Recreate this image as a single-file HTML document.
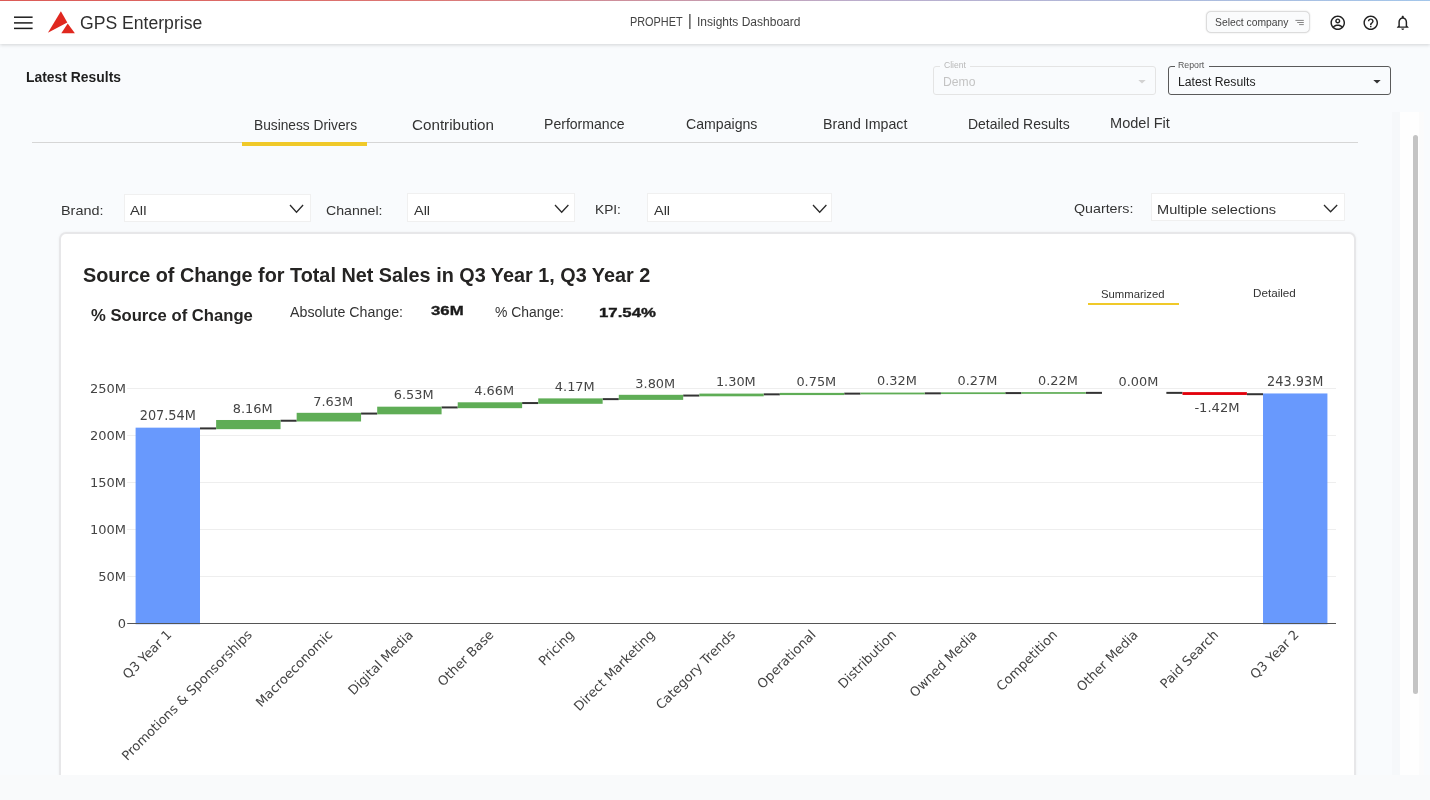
<!DOCTYPE html>
<html lang="en">
<head>
<meta charset="utf-8">
<title>GPS Enterprise - Insights Dashboard</title>
<style>
html,body{margin:0;padding:0}
body{width:1430px;height:800px;overflow:hidden;position:relative;will-change:transform;background:#f9fbfd;font-family:'Liberation Sans', Arial, sans-serif}
.abs{position:absolute}
.tx{position:absolute;white-space:nowrap;transform-origin:0 50%}
#topline{left:0;top:0;width:1430px;height:1px;background:linear-gradient(90deg,#dc5a56 0%,#dc7875 30%,#bbadcc 60%,#a3c6ea 100%)}
#header{left:0;top:0;width:1430px;height:43.6px;background:#fff;box-shadow:0 1px 3.5px rgba(0,0,0,.16)}
.dd{background:#fff;border:1px solid #f0f0f0;box-sizing:border-box}
#card{left:59.3px;top:231.7px;width:1296.8px;height:560px;background:#fff;border:2.3px solid #e7e7e9;border-radius:7px;box-sizing:border-box;box-shadow:0 0 3px rgba(0,0,0,.05)}
#bottom{left:0;top:775px;width:1430px;height:25px;background:#f9fafb}
</style>
</head>
<body>
<div id="header" class="abs"></div>
<div id="topline" class="abs"></div>
<!-- hamburger -->
<svg class="abs" style="left:12px;top:12px" width="24" height="24" viewBox="12 12 24 24"><g stroke="#1c1c1c" stroke-width="1.5"><line x1="14" x2="32.6" y1="17.2" y2="17.2"/><line x1="14" x2="32.6" y1="22.9" y2="22.9"/><line x1="14" x2="32.6" y1="28.4" y2="28.4"/></g></svg>
<!-- logo -->
<svg class="abs" style="left:46px;top:9px" width="32" height="28" viewBox="46 9 32 28"><polygon points="60.9,11.2 47.9,32.8 67.3,22.6" fill="#e0281f"/><polygon points="67.7,23.6 61.3,33.2 74.9,33.2" fill="#e0281f"/></svg>
<!-- separator bar between PROPHET and Insights -->
<span class="tx" id="t_bar" style="left:688.3px;top:11.6px;font-size:16px;line-height:18px;color:#333;transform:scaleX(.9)">|</span>
<!-- select company -->
<div class="abs" style="left:1206.3px;top:11.2px;width:103.8px;height:21.6px;border:1px solid #dcdcdc;border-radius:5px;box-sizing:border-box;background:#fafbfc;box-shadow:0 0 1.5px rgba(0,0,0,.18)"></div>
<svg class="abs" style="left:1294px;top:18px" width="12" height="9" viewBox="1294 18 12 9"><g stroke="#777" stroke-width="0.9"><line x1="1295.4" x2="1303.8" y1="20.4" y2="20.4"/><line x1="1297.2" x2="1303.8" y1="22.5" y2="22.5"/><line x1="1299.1" x2="1303.8" y1="24.6" y2="24.6"/></g></svg>
<svg class="abs" style="left:1328.95px;top:14.1px" width="17.5" height="17.5" viewBox="0 0 24 24"><path d="M12 2C6.48 2 2 6.48 2 12s4.48 10 10 10 10-4.48 10-10S17.52 2 12 2zM7.07 18.28c.43-.9 3.05-1.78 4.93-1.78s4.51.88 4.93 1.78C15.57 19.36 13.86 20 12 20s-3.57-.64-4.93-1.72zm11.29-1.45c-1.43-1.74-4.9-2.33-6.36-2.33s-4.93.59-6.36 2.33C4.62 15.49 4 13.82 4 12c0-4.41 3.59-8 8-8s8 3.59 8 8c0 1.82-.62 3.49-1.64 4.83zM12 6c-1.94 0-3.5 1.56-3.5 3.5S10.06 13 12 13s3.5-1.56 3.5-3.5S13.94 6 12 6zm0 5c-.83 0-1.5-.67-1.5-1.5S11.17 8 12 8s1.5.67 1.5 1.5S12.83 11 12 11z" fill="#222"/></svg>
<svg class="abs" style="left:1361.65px;top:14.1px" width="17.5" height="17.5" viewBox="0 0 24 24"><path d="M11 18h2v-2h-2v2zm1-16C6.48 2 2 6.48 2 12s4.48 10 10 10 10-4.48 10-10S17.52 2 12 2zm0 18c-4.41 0-8-3.59-8-8s3.59-8 8-8 8 3.59 8 8-3.59 8-8 8zm0-14c-2.21 0-4 1.79-4 4h2c0-1.1.9-2 2-2s2 .9 2 2c0 2-3 1.75-3 5h2c0-2.25 3-2.5 3-5 0-2.21-1.79-4-4-4z" fill="#222"/></svg>
<svg class="abs" style="left:1393.7px;top:14.3px" width="17.5" height="17.5" viewBox="0 0 24 24"><path d="M12 22c1.1 0 2-.9 2-2h-4c0 1.1.9 2 2 2zm6-6v-5c0-3.07-1.63-5.64-4.5-6.32V4c0-.83-.67-1.5-1.5-1.5s-1.5.67-1.500 1.500v.68C7.640 5.360 6 7.920 6 11v5l-2 2v1h16v-1l-2-2zm-2 1H8v-6c0-2.480 1.510-4.500 4-4.500s4 2.020 4 4.500v6z" fill="#222"/></svg>

<!-- client / report -->
<div class="abs" style="left:932.5px;top:66px;width:223.3px;height:29.2px;border:1px solid #e4e4e4;border-radius:3px;box-sizing:border-box"></div>
<div class="abs" style="left:940px;top:61px;width:30px;height:8px;background:#f9fbfd"></div>
<svg class="abs" style="left:1137px;top:78px" width="10" height="6" viewBox="0 0 10 6"><polygon points="1.3,2 8.7,2 5,5.6" fill="#d2d2d2"/></svg>
<div class="abs" style="left:1168px;top:66px;width:223.3px;height:29.2px;border:1px solid #5a5a5a;border-radius:3px;box-sizing:border-box"></div>
<div class="abs" style="left:1175px;top:61px;width:34px;height:8px;background:#f9fbfd"></div>
<svg class="abs" style="left:1372px;top:78px" width="10" height="6" viewBox="0 0 10 6"><polygon points="1.3,2 8.7,2 5,5.6" fill="#333"/></svg>

<!-- tabs -->
<div class="abs" style="left:32px;top:142px;width:1326px;height:1px;background:#d6d6d6"></div>
<div class="abs" style="left:242px;top:142px;width:125px;height:4px;background:#f0c929"></div>

<!-- scrollbar strip -->
<div class="abs" style="left:1392px;top:111.5px;width:9px;height:664px;background:#f6f8fa"></div>
<div class="abs" style="left:1400.3px;top:111.5px;width:23.6px;height:664px;background:linear-gradient(90deg,#fefefe 0,#fefefe 78%,#fbfbfb 80%,#fbfbfc 100%)"></div>
<div class="abs" style="left:1412.5px;top:135px;width:5.5px;height:558.5px;background:#c4c4c4;border-radius:3px"></div>

<!-- filters -->
<div class="abs dd" style="left:123.5px;top:193.5px;width:187px;height:28px"></div>
<div class="abs dd" style="left:407.3px;top:193.3px;width:168.2px;height:28.3px"></div>
<div class="abs dd" style="left:647.3px;top:193.3px;width:185px;height:28.3px"></div>
<div class="abs dd" style="left:1150.5px;top:193px;width:194.5px;height:28px"></div>
<svg class="abs" style="left:287.9px;top:203.2px" width="17.1" height="11.2" viewBox="287.9 203.2 17.1 11.2"><polyline points="289.9,205.2 296.4,212.4 303.0,205.2" fill="none" stroke="#2b2b2b" stroke-width="1.3" stroke-linejoin="miter"/></svg>
<svg class="abs" style="left:552.6px;top:203.2px" width="17.4" height="11.2" viewBox="552.6 203.2 17.4 11.2"><polyline points="554.6,205.2 561.3,212.4 568.0,205.2" fill="none" stroke="#2b2b2b" stroke-width="1.3" stroke-linejoin="miter"/></svg>
<svg class="abs" style="left:810.8px;top:203.2px" width="17.4" height="11.2" viewBox="810.8 203.2 17.4 11.2"><polyline points="812.8,205.2 819.5,212.4 826.2,205.2" fill="none" stroke="#2b2b2b" stroke-width="1.3" stroke-linejoin="miter"/></svg>
<svg class="abs" style="left:1321.8px;top:203.0px" width="17.2" height="10.8" viewBox="1321.8 203.0 17.2 10.8"><polyline points="1323.8,205.0 1330.4,211.8 1337.0,205.0" fill="none" stroke="#2b2b2b" stroke-width="1.3" stroke-linejoin="miter"/></svg>

<!-- card -->
<div id="card" class="abs"></div>
<div class="abs" style="left:1088px;top:302.8px;width:91px;height:2.2px;background:#f0c929"></div>
<svg id="chart" width="1295" height="440" viewBox="60 360 1295 440" style="position:absolute;left:60px;top:360px;overflow:visible" font-family="'DejaVu Sans', 'Liberation Sans', Verdana, sans-serif">
<line x1="127.2" x2="1336.0" y1="576.50" y2="576.50" stroke="#eeeeee" stroke-width="1.1"/>
<line x1="127.2" x2="1336.0" y1="529.50" y2="529.50" stroke="#eeeeee" stroke-width="1.1"/>
<line x1="127.2" x2="1336.0" y1="482.50" y2="482.50" stroke="#eeeeee" stroke-width="1.1"/>
<line x1="127.2" x2="1336.0" y1="435.50" y2="435.50" stroke="#eeeeee" stroke-width="1.1"/>
<line x1="127.2" x2="1336.0" y1="388.50" y2="388.50" stroke="#eeeeee" stroke-width="1.1"/>
<text x="126" y="627.80" text-anchor="end" font-size="13" fill="#444">0</text>
<text x="126" y="580.80" text-anchor="end" font-size="13" fill="#444">50M</text>
<text x="126" y="533.80" text-anchor="end" font-size="13" fill="#444">100M</text>
<text x="126" y="486.80" text-anchor="end" font-size="13" fill="#444">150M</text>
<text x="126" y="439.80" text-anchor="end" font-size="13" fill="#444">200M</text>
<text x="126" y="392.80" text-anchor="end" font-size="13" fill="#444">250M</text>
<line x1="200.00" x2="216.13" y1="428.41" y2="428.41" stroke="#333333" stroke-width="2"/>
<line x1="280.53" x2="296.66" y1="420.74" y2="420.74" stroke="#333333" stroke-width="2"/>
<line x1="361.06" x2="377.19" y1="413.57" y2="413.57" stroke="#333333" stroke-width="2"/>
<line x1="441.59" x2="457.72" y1="407.43" y2="407.43" stroke="#333333" stroke-width="2"/>
<line x1="522.12" x2="538.25" y1="403.05" y2="403.05" stroke="#333333" stroke-width="2"/>
<line x1="602.65" x2="618.78" y1="399.13" y2="399.13" stroke="#333333" stroke-width="2"/>
<line x1="683.18" x2="699.31" y1="395.56" y2="395.56" stroke="#333333" stroke-width="2"/>
<line x1="763.71" x2="779.84" y1="394.34" y2="394.34" stroke="#333333" stroke-width="2"/>
<line x1="844.24" x2="860.37" y1="393.63" y2="393.63" stroke="#333333" stroke-width="2"/>
<line x1="924.77" x2="940.90" y1="393.33" y2="393.33" stroke="#333333" stroke-width="2"/>
<line x1="1005.30" x2="1021.43" y1="393.08" y2="393.08" stroke="#333333" stroke-width="2"/>
<line x1="1085.83" x2="1101.96" y1="392.87" y2="392.87" stroke="#333333" stroke-width="2"/>
<line x1="1166.36" x2="1182.49" y1="392.87" y2="392.87" stroke="#333333" stroke-width="2"/>
<line x1="1246.89" x2="1263.02" y1="394.21" y2="394.21" stroke="#333333" stroke-width="2"/>
<rect x="135.60" y="427.66" width="64.40" height="196.59" fill="#6899fd"/>
<rect x="216.13" y="419.99" width="64.40" height="9.17" fill="#5fad56"/>
<rect x="296.66" y="412.82" width="64.40" height="8.67" fill="#5fad56"/>
<rect x="377.19" y="406.68" width="64.40" height="7.64" fill="#5fad56"/>
<rect x="457.72" y="402.30" width="64.40" height="5.88" fill="#5fad56"/>
<rect x="538.25" y="398.38" width="64.40" height="5.42" fill="#5fad56"/>
<rect x="618.78" y="394.81" width="64.40" height="5.07" fill="#5fad56"/>
<rect x="699.31" y="393.59" width="64.40" height="2.72" fill="#5fad56"/>
<rect x="779.84" y="392.88" width="64.40" height="2.20" fill="#5fad56"/>
<rect x="860.37" y="392.58" width="64.40" height="1.80" fill="#5fad56"/>
<rect x="940.90" y="392.33" width="64.40" height="1.75" fill="#5fad56"/>
<rect x="1021.43" y="392.12" width="64.40" height="1.71" fill="#5fad56"/>
<rect x="1182.49" y="392.12" width="64.40" height="2.83" fill="#e2000b"/>
<rect x="1263.02" y="393.46" width="64.40" height="230.79" fill="#6899fd"/>
<line x1="127.2" x2="1336.0" y1="623.50" y2="623.50" stroke="#555" stroke-width="1.2"/>
<text x="167.80" y="420.41" text-anchor="middle" font-size="13.4" textLength="56.2" lengthAdjust="spacingAndGlyphs" fill="#444">207.54M</text>
<text x="252.63" y="412.74" text-anchor="middle" font-size="12.9" fill="#444">8.16M</text>
<text x="333.16" y="405.57" text-anchor="middle" font-size="12.9" fill="#444">7.63M</text>
<text x="413.69" y="399.43" text-anchor="middle" font-size="12.9" fill="#444">6.53M</text>
<text x="494.22" y="395.05" text-anchor="middle" font-size="12.9" fill="#444">4.66M</text>
<text x="574.75" y="391.13" text-anchor="middle" font-size="12.9" fill="#444">4.17M</text>
<text x="655.28" y="387.56" text-anchor="middle" font-size="12.9" fill="#444">3.80M</text>
<text x="735.81" y="386.34" text-anchor="middle" font-size="12.9" fill="#444">1.30M</text>
<text x="816.34" y="385.63" text-anchor="middle" font-size="12.9" fill="#444">0.75M</text>
<text x="896.87" y="385.33" text-anchor="middle" font-size="12.9" fill="#444">0.32M</text>
<text x="977.40" y="385.08" text-anchor="middle" font-size="12.9" fill="#444">0.27M</text>
<text x="1057.93" y="384.87" text-anchor="middle" font-size="12.9" fill="#444">0.22M</text>
<text x="1138.46" y="385.67" text-anchor="middle" font-size="12.9" fill="#444">0.00M</text>
<text x="1216.99" y="411.71" text-anchor="middle" font-size="13.1" fill="#444">-1.42M</text>
<text x="1295.22" y="386.21" text-anchor="middle" font-size="13.4" textLength="56.2" lengthAdjust="spacingAndGlyphs" fill="#444">243.93M</text>
<text transform="translate(172.30,635.50) rotate(-45)" text-anchor="end" font-size="13" fill="#444">Q3 Year 1</text>
<text transform="translate(252.83,635.50) rotate(-45)" text-anchor="end" font-size="13" fill="#444">Promotions &amp; Sponsorships</text>
<text transform="translate(333.36,635.50) rotate(-45)" text-anchor="end" font-size="13" fill="#444">Macroeconomic</text>
<text transform="translate(413.89,635.50) rotate(-45)" text-anchor="end" font-size="13" fill="#444">Digital Media</text>
<text transform="translate(494.42,635.50) rotate(-45)" text-anchor="end" font-size="13" fill="#444">Other Base</text>
<text transform="translate(574.95,635.50) rotate(-45)" text-anchor="end" font-size="13" fill="#444">Pricing</text>
<text transform="translate(655.48,635.50) rotate(-45)" text-anchor="end" font-size="13" fill="#444">Direct Marketing</text>
<text transform="translate(736.01,635.50) rotate(-45)" text-anchor="end" font-size="13" fill="#444">Category Trends</text>
<text transform="translate(816.54,635.50) rotate(-45)" text-anchor="end" font-size="13" fill="#444">Operational</text>
<text transform="translate(897.07,635.50) rotate(-45)" text-anchor="end" font-size="13" fill="#444">Distribution</text>
<text transform="translate(977.60,635.50) rotate(-45)" text-anchor="end" font-size="13" fill="#444">Owned Media</text>
<text transform="translate(1058.13,635.50) rotate(-45)" text-anchor="end" font-size="13" fill="#444">Competition</text>
<text transform="translate(1138.66,635.50) rotate(-45)" text-anchor="end" font-size="13" fill="#444">Other Media</text>
<text transform="translate(1219.19,635.50) rotate(-45)" text-anchor="end" font-size="13" fill="#444">Paid Search</text>
<text transform="translate(1299.72,635.50) rotate(-45)" text-anchor="end" font-size="13" fill="#444">Q3 Year 2</text>
</svg>
<div id="bottom" class="abs"></div>
<span id="t_gps" class="tx" style="left:79.50px;top:14.50px;font-size:17.5px;line-height:17.5px;font-weight:400;color:#2f2f2f;letter-spacing:0.000px;transform:scaleX(1.0057);font-family:'Liberation Sans', Arial, sans-serif;">GPS Enterprise</span>
<span id="t_prophet" class="tx" style="left:630.10px;top:15.71px;font-size:12px;line-height:12px;font-weight:400;color:#444;letter-spacing:0.000px;transform:scaleX(0.9067);font-family:'Liberation Sans', Arial, sans-serif;">PROPHET</span>
<span id="t_insights" class="tx" style="left:697.03px;top:15.71px;font-size:12px;line-height:12px;font-weight:400;color:#444;letter-spacing:0.000px;transform:scaleX(1.0003);font-family:'Liberation Sans', Arial, sans-serif;">Insights Dashboard</span>
<span id="t_selco" class="tx" style="left:1214.80px;top:17.21px;font-size:11px;line-height:11px;font-weight:400;color:#444;letter-spacing:0.000px;transform:scaleX(0.9387);font-family:'Liberation Sans', Arial, sans-serif;">Select company</span>
<span id="t_latest" class="tx" style="left:26.20px;top:68.90px;font-size:15.4px;line-height:15.4px;font-weight:700;color:#1f1f1f;letter-spacing:0.000px;transform:scaleX(0.9033);font-family:'Liberation Sans', Arial, sans-serif;">Latest Results</span>
<span id="t_client" class="tx" style="left:943.80px;top:60.80px;font-size:9px;line-height:9px;font-weight:400;color:#b8b8b8;letter-spacing:0.000px;transform:scaleX(0.9534);font-family:'Liberation Sans', Arial, sans-serif;">Client</span>
<span id="t_demo" class="tx" style="left:943.05px;top:75.61px;font-size:12px;line-height:12px;font-weight:400;color:#c4c4c4;letter-spacing:0.000px;transform:scaleX(1.0132);font-family:'Liberation Sans', Arial, sans-serif;">Demo</span>
<span id="t_report" class="tx" style="left:1178.20px;top:60.80px;font-size:9px;line-height:9px;font-weight:400;color:#555;letter-spacing:0.000px;transform:scaleX(0.9730);font-family:'Liberation Sans', Arial, sans-serif;">Report</span>
<span id="t_latest2" class="tx" style="left:1177.90px;top:75.61px;font-size:12px;line-height:12px;font-weight:400;color:#222;letter-spacing:0.000px;transform:scaleX(1.0196);font-family:'Liberation Sans', Arial, sans-serif;">Latest Results</span>
<span id="t_tab1" class="tx" style="left:253.50px;top:118.21px;font-size:14.5px;line-height:14.5px;font-weight:400;color:#333;letter-spacing:0.000px;transform:scaleX(0.9474);font-family:'Liberation Sans', Arial, sans-serif;">Business Drivers</span>
<span id="t_tab2" class="tx" style="left:412.00px;top:118.21px;font-size:14.5px;line-height:14.5px;font-weight:400;color:#333;letter-spacing:0.000px;transform:scaleX(1.0483);font-family:'Liberation Sans', Arial, sans-serif;">Contribution</span>
<span id="t_tab3" class="tx" style="left:544.00px;top:116.60px;font-size:14.5px;line-height:14.5px;font-weight:400;color:#333;letter-spacing:0.000px;transform:scaleX(0.9699);font-family:'Liberation Sans', Arial, sans-serif;">Performance</span>
<span id="t_tab4" class="tx" style="left:685.83px;top:116.60px;font-size:14.5px;line-height:14.5px;font-weight:400;color:#333;letter-spacing:0.000px;transform:scaleX(0.9733);font-family:'Liberation Sans', Arial, sans-serif;">Campaigns</span>
<span id="t_tab5" class="tx" style="left:823.00px;top:117.01px;font-size:14.5px;line-height:14.5px;font-weight:400;color:#333;letter-spacing:0.000px;transform:scaleX(0.9779);font-family:'Liberation Sans', Arial, sans-serif;">Brand Impact</span>
<span id="t_tab6" class="tx" style="left:968.00px;top:117.01px;font-size:14.5px;line-height:14.5px;font-weight:400;color:#333;letter-spacing:0.000px;transform:scaleX(0.9626);font-family:'Liberation Sans', Arial, sans-serif;">Detailed Results</span>
<span id="t_tab7" class="tx" style="left:1110.00px;top:116.01px;font-size:14.5px;line-height:14.5px;font-weight:400;color:#333;letter-spacing:0.000px;transform:scaleX(1.0043);font-family:'Liberation Sans', Arial, sans-serif;">Model Fit</span>
<span id="t_brand" class="tx" style="left:60.94px;top:203.91px;font-size:13.4px;line-height:13.4px;font-weight:400;color:#333;letter-spacing:0.000px;transform:scaleX(1.0768);font-family:'Liberation Sans', Arial, sans-serif;">Brand:</span>
<span id="t_all1" class="tx" style="left:130.40px;top:204.31px;font-size:13.4px;line-height:13.4px;font-weight:400;color:#333;letter-spacing:0.000px;transform:scaleX(1.1030);font-family:'Liberation Sans', Arial, sans-serif;">All</span>
<span id="t_channel" class="tx" style="left:326.46px;top:204.01px;font-size:13.4px;line-height:13.4px;font-weight:400;color:#333;letter-spacing:0.000px;transform:scaleX(1.0546);font-family:'Liberation Sans', Arial, sans-serif;">Channel:</span>
<span id="t_all2" class="tx" style="left:413.90px;top:204.01px;font-size:13.4px;line-height:13.4px;font-weight:400;color:#333;letter-spacing:0.000px;transform:scaleX(1.0778);font-family:'Liberation Sans', Arial, sans-serif;">All</span>
<span id="t_kpi" class="tx" style="left:595.30px;top:202.81px;font-size:13.4px;line-height:13.4px;font-weight:400;color:#333;letter-spacing:0.000px;transform:scaleX(1.0242);font-family:'Liberation Sans', Arial, sans-serif;">KPI:</span>
<span id="t_all3" class="tx" style="left:653.90px;top:203.61px;font-size:13.4px;line-height:13.4px;font-weight:400;color:#333;letter-spacing:0.000px;transform:scaleX(1.0778);font-family:'Liberation Sans', Arial, sans-serif;">All</span>
<span id="t_quarters" class="tx" style="left:1073.52px;top:201.90px;font-size:13.4px;line-height:13.4px;font-weight:400;color:#333;letter-spacing:0.000px;transform:scaleX(1.0635);font-family:'Liberation Sans', Arial, sans-serif;">Quarters:</span>
<span id="t_multi" class="tx" style="left:1156.70px;top:203.10px;font-size:13.4px;line-height:13.4px;font-weight:400;color:#333;letter-spacing:0.000px;transform:scaleX(1.0879);font-family:'Liberation Sans', Arial, sans-serif;">Multiple selections</span>
<span id="t_title" class="tx" style="left:82.94px;top:265.86px;font-size:19.3px;line-height:19.3px;font-weight:700;color:#252423;letter-spacing:0.000px;transform:scaleX(1.0279);font-family:'Liberation Sans', Arial, sans-serif;">Source of Change for Total Net Sales in Q3 Year 1, Q3 Year 2</span>
<span id="t_pct" class="tx" style="left:90.50px;top:307.71px;font-size:15.8px;line-height:15.8px;font-weight:700;color:#252423;letter-spacing:0.000px;transform:scaleX(1.0539);font-family:'Liberation Sans', Arial, sans-serif;">% Source of Change</span>
<span id="t_abs" class="tx" style="left:290.00px;top:305.31px;font-size:14px;line-height:14px;font-weight:400;color:#333;letter-spacing:0.000px;transform:scaleX(1.0158);font-family:'Liberation Sans', Arial, sans-serif;">Absolute Change:</span>
<span id="t_36m" class="tx" style="left:430.69px;top:303.80px;font-size:13.2px;line-height:13.2px;font-weight:700;color:#1a1a1a;letter-spacing:0.000px;transform:scaleX(1.2699);font-family:'Liberation Sans', Arial, sans-serif;-webkit-text-stroke:.35px #1a1a1a;">36M</span>
<span id="t_pchg" class="tx" style="left:495.00px;top:305.31px;font-size:14px;line-height:14px;font-weight:400;color:#333;letter-spacing:0.000px;transform:scaleX(0.9941);font-family:'Liberation Sans', Arial, sans-serif;">% Change:</span>
<span id="t_1754" class="tx" style="left:599.12px;top:305.91px;font-size:13.2px;line-height:13.2px;font-weight:700;color:#1a1a1a;letter-spacing:0.000px;transform:scaleX(1.2720);font-family:'Liberation Sans', Arial, sans-serif;-webkit-text-stroke:.35px #1a1a1a;">17.54%</span>
<span id="t_summ" class="tx" style="left:1101.00px;top:289.10px;font-size:11.5px;line-height:11.5px;font-weight:400;color:#333;letter-spacing:0.000px;transform:scaleX(0.9848);font-family:'Liberation Sans', Arial, sans-serif;">Summarized</span>
<span id="t_det" class="tx" style="left:1253.40px;top:287.90px;font-size:11.5px;line-height:11.5px;font-weight:400;color:#333;letter-spacing:0.000px;transform:scaleX(1.0146);font-family:'Liberation Sans', Arial, sans-serif;">Detailed</span>
</body>
</html>
